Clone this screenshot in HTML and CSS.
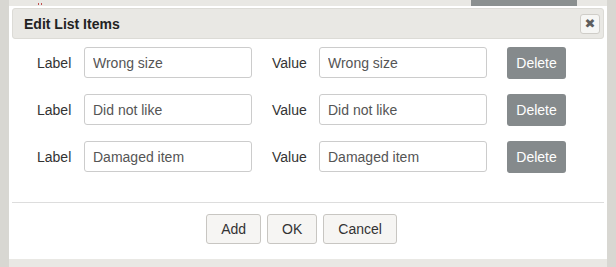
FILE: index.html
```html
<!DOCTYPE html>
<html>
<head>
<meta charset="utf-8">
<link rel="stylesheet" href="styles.css">
</head>
<body>
<div class="page">
  <div class="topbar">
    <span class="mark"></span>
    <span class="topbtn"></span>
  </div>
  <div class="dialog">
    <div class="titlebar">
      <span class="title">Edit List Items</span>
      <button class="close" aria-label="Close">✖</button>
    </div>
    <div class="rows">
      <div class="row">
        <span class="lbl">Label</span>
        <input class="field" value="Wrong size">
        <span class="lbl val">Value</span>
        <input class="field" value="Wrong size">
        <button class="del">Delete</button>
      </div>
      <div class="row">
        <span class="lbl">Label</span>
        <input class="field" value="Did not like">
        <span class="lbl val">Value</span>
        <input class="field" value="Did not like">
        <button class="del">Delete</button>
      </div>
      <div class="row">
        <span class="lbl">Label</span>
        <input class="field" value="Damaged item">
        <span class="lbl val">Value</span>
        <input class="field" value="Damaged item">
        <button class="del">Delete</button>
      </div>
    </div>
    <div class="sep"></div>
    <div class="footer">
      <button class="btn">Add</button>
      <button class="btn">OK</button>
      <button class="btn">Cancel</button>
    </div>
  </div>
</div>
</body>
</html>
```
FILE: styles.css
```css
html, body {
  margin: 0;
  padding: 0;
}
body {
  width: 616px;
  height: 267px;
  overflow: hidden;
  background: #d8d7d2;
  font-family: "Liberation Sans", Arial, sans-serif;
  font-size: 14px;
  color: #333;
}
.page {
  margin: 0 9px 0 9px;
  height: 267px;
  background: #e9e8e4;
}
.topbar {
  height: 6px;
  display: flex;
  align-items: flex-start;
  overflow: hidden;
}
.mark {
  margin-left: 29px;
  margin-top: 3px;
  width: 4px;
  height: 2px;
  border-left: 1px solid #c05050;
  border-right: 1px solid #c05050;
  box-sizing: border-box;
}
.topbtn {
  margin-left: 429px;
  width: 106px;
  height: 6px;
  background: #8b9090;
}
.dialog {
  background: #fff;
  padding: 2px 3px 15px 3px;
}
.titlebar {
  height: 29px;
  background: #e9e8e4;
  border: 1px solid #dcdbd6;
  border-radius: 3px;
  display: flex;
  align-items: center;
  justify-content: space-between;
  padding: 0 3px 0 11px;
}
.title {
  font-weight: bold;
  font-size: 14px;
  color: #222;
}
.close {
  width: 20px;
  height: 20px;
  padding: 0;
  border: 1px solid #cfcdc8;
  border-radius: 3px;
  background: #f6f6f4;
  color: #5e5e5e;
  font-size: 13px;
  line-height: 18px;
  font-family: "DejaVu Sans", sans-serif;
}
.rows {
  display: flex;
  flex-direction: column;
  gap: 16px;
  padding: 8px 0 0 25px;
}
.row {
  display: flex;
  align-items: center;
  height: 31px;
}
.lbl {
  width: 47px;
  color: #333;
}
.val {
  margin-left: 20px;
}
.field {
  box-sizing: border-box;
  width: 168px;
  height: 31px;
  border: 1px solid #ccc;
  border-radius: 3px;
  padding: 0 8px;
  font-family: "Liberation Sans", Arial, sans-serif;
  font-size: 14px;
  color: #555;
  margin: 0;
}
.del {
  margin-left: 20px;
  box-sizing: border-box;
  width: 59px;
  height: 32px;
  border: none;
  border-radius: 3px;
  background: #858a8c;
  color: #fff;
  font-family: "Liberation Sans", Arial, sans-serif;
  font-size: 14px;
  padding: 0;
}
.sep {
  margin-top: 30px;
  height: 1px;
  background: #ddd;
}
.footer {
  display: flex;
  justify-content: center;
  gap: 6px;
  padding: 11px 13px 0 0;
}
.btn {
  box-sizing: border-box;
  height: 30px;
  padding: 0 14px;
  border: 1px solid #c8c6c2;
  border-radius: 3px;
  background: #f6f5f3;
  color: #333;
  font-family: "Liberation Sans", Arial, sans-serif;
  font-size: 14px;
}
```
